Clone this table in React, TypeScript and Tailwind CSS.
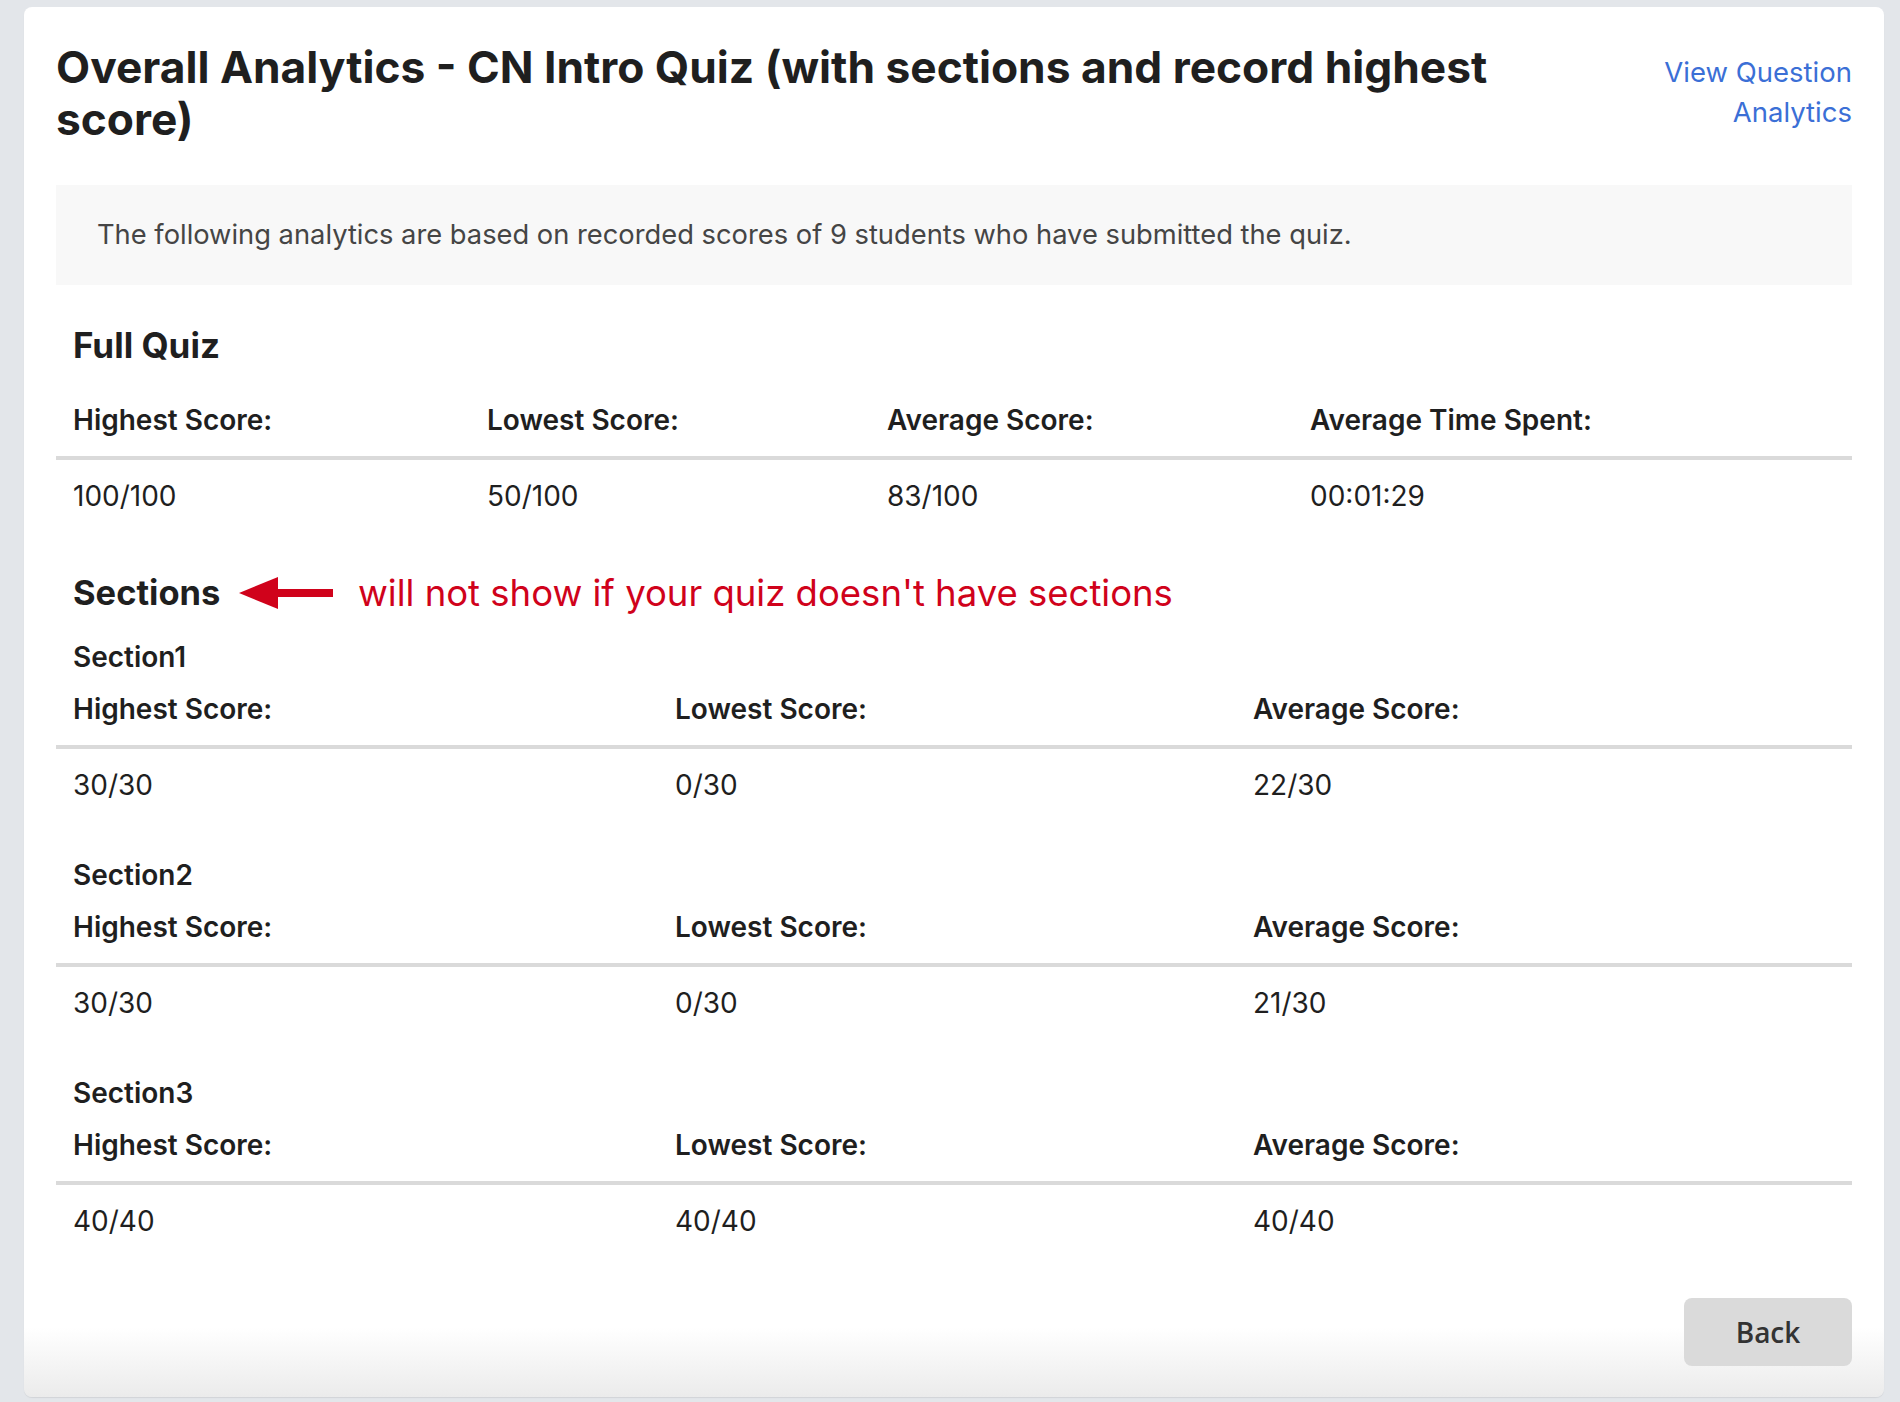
import React from 'react';

const sections = [
  { name: 'Section1', highest: '30/30', lowest: '0/30', average: '22/30' },
  { name: 'Section2', highest: '30/30', lowest: '0/30', average: '21/30' },
  { name: 'Section3', highest: '40/40', lowest: '40/40', average: '40/40' },
];

function Divider() {
  return <div className="h-[4px] bg-[#dadada]" />;
}

function LeftArrow() {
  return (
    <svg width="94" height="32" viewBox="0 0 94 32" className="shrink-0">
      <polygon points="0,16 39,0 39,32" fill="#d0021b" />
      <rect x="37" y="12" width="57" height="8" fill="#d0021b" />
    </svg>
  );
}

export default function App() {
  return (
    <div
      className="min-h-screen bg-[#e3e6ea] pt-[7px] pl-[24px]"
      style={{ fontFamily: 'Inter, "Noto Sans", sans-serif' }}
    >
      <div className="w-[1860px] rounded-lg bg-[linear-gradient(to_bottom,#ffffff_95%,#ebebeb)] px-[32px] pt-[34px] pb-[31px] text-[#1f1f1f] shadow-[0_1px_1px_rgba(0,0,0,0.08)]">
        {/* header */}
        <div className="flex items-start justify-between">
          <h1 className="w-[1480px] text-[44.3px] font-bold leading-[52px] text-[#1f1f1f]">
            Overall Analytics - CN Intro Quiz (with sections and record highest score)
          </h1>
          <a className="mt-[11px] w-[200px] text-right text-[27.5px] leading-[40px] text-[#3b6fd6]">
            View Question Analytics
          </a>
        </div>

        <div className="mt-[40px] flex h-[100px] items-center bg-[#f8f8f8] px-[41px] text-[27.3px] text-[#454545]">
          The following analytics are based on recorded scores of 9 students who have submitted the quiz.
        </div>

        {/* full quiz */}
        <h2 className="mt-[35px] h-[50px] pl-[17px] text-[35px] font-bold leading-[50px]">Full Quiz</h2>
        <div className="mt-[14px]">
          <div className="grid h-[72px] grid-cols-[414px_400px_423px_1fr] items-center text-[28px] font-semibold">
            <div className="pl-[17px]">Highest Score:</div>
            <div className="pl-[17px]">Lowest Score:</div>
            <div className="pl-[17px]">Average Score:</div>
            <div className="pl-[17px]">Average Time Spent:</div>
          </div>
          <Divider />
          <div className="grid h-[72px] grid-cols-[414px_400px_423px_1fr] items-center text-[28px]">
            <div className="pl-[17px]">100/100</div>
            <div className="pl-[17px]">50/100</div>
            <div className="pl-[17px]">83/100</div>
            <div className="pl-[17px]">00:01:29</div>
          </div>
        </div>

        {/* sections */}
        <div className="mt-[36px] flex h-[50px] items-center pl-[17px]">
          <span className="w-[166px] shrink-0 text-[34.5px] font-bold">Sections</span>
          <LeftArrow />
          <span className="ml-[25px] text-[36.5px] text-[#d0021b]">will not show if your quiz doesn't have sections</span>
        </div>

        {sections.map((s, i) => (
          <div key={s.name} className={i === 0 ? 'mt-[23px]' : 'mt-[38px]'}>
            <div className="h-[32px] pl-[17px] text-[28px] font-semibold leading-[32px]">{s.name}</div>
            <div className="grid h-[72px] grid-cols-[602px_578px_1fr] items-center text-[28px] font-semibold">
              <div className="pl-[17px]">Highest Score:</div>
              <div className="pl-[17px]">Lowest Score:</div>
              <div className="pl-[17px]">Average Score:</div>
            </div>
            <Divider />
            <div className="grid h-[72px] grid-cols-[602px_578px_1fr] items-center text-[28px]">
              <div className="pl-[17px]">{s.highest}</div>
              <div className="pl-[17px]">{s.lowest}</div>
              <div className="pl-[17px]">{s.average}</div>
            </div>
          </div>
        ))}

        <div className="mt-[41px] flex justify-end">
          <button
            className="h-[68px] w-[168px] rounded-lg bg-[#dadada] text-[28px] font-semibold text-[#333333]"
            style={{ fontFamily: '"Open Sans", sans-serif' }}
          >
            Back
          </button>
        </div>
      </div>
    </div>
  );
}
